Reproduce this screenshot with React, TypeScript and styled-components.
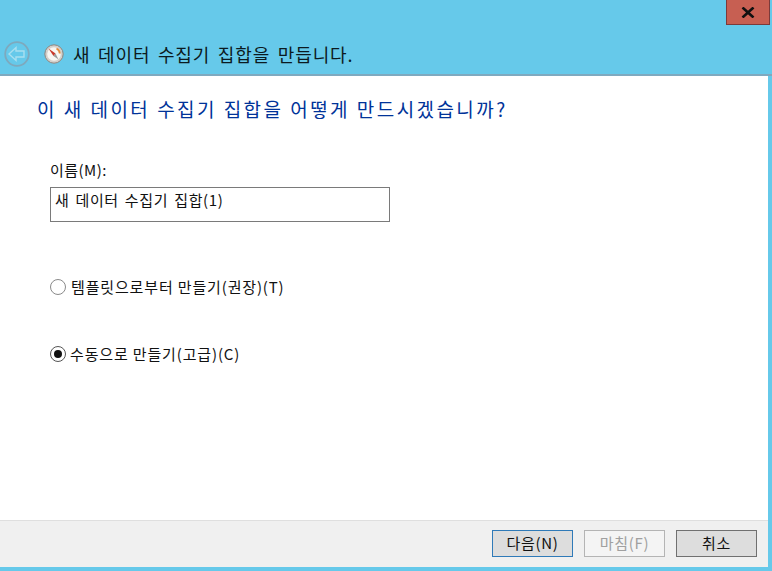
import React from "react";
import styled, { createGlobalStyle } from "styled-components";

const Global = createGlobalStyle`
  html, body { margin: 0; padding: 0; background: #66c9ea; }
  * { box-sizing: border-box; }
`;
const FONT = `"Noto Sans CJK KR", "Noto Sans", sans-serif`;

const Frame = styled.div`
  width: 772px;
  height: 571px;
  display: flex;
  flex-direction: column;
  overflow: hidden;
  background: #66c9ea;
  font-family: ${FONT};
  color: #000;
`;
const CaptionBar = styled.div`
  height: 25px;
  display: flex;
  justify-content: flex-end;
  padding-right: 2px;
`;
const CloseButton = styled.div`
  width: 44px;
  height: 25px;
  background: #c75f52;
  border: 1px solid #7c3a3a;
  border-top: none;
  display: flex;
  align-items: center;
  justify-content: center;
`;
const NavBar = styled.div`
  height: 49px;
  display: flex;
  align-items: center;
  padding: 9px 0 0 4px;
`;
const BackButton = styled.div`
  width: 26px;
  height: 26px;
  flex: none;
  margin-right: 14px;
  display: flex;
`;
const WizardIcon = styled.div`
  width: 20px;
  height: 20px;
  flex: none;
  margin-right: 9px;
  display: flex;
`;
const TitleText = styled.div`
  font-size: 18px;
  line-height: 24px;
  letter-spacing: 0.9px;
  word-spacing: 2.6px;
  color: #0c1a20;
`;
const Divider = styled.div`
  height: 2px;
  background: #7fa9bf;
`;
const Panel = styled.div`
  width: 768px;
  flex: 1;
  display: flex;
  flex-direction: column;
  background: #fff;
`;
const Content = styled.div`
  flex: 1;
  padding: 20px 0 0 37px;
  display: flex;
  flex-direction: column;
`;
const Heading = styled.div`
  font-size: 19px;
  line-height: 26px;
  letter-spacing: 2.42px;
  word-spacing: 0.2px;
  color: #003399;
`;
const FieldLabel = styled.div`
  margin: 39px 0 0 13px;
  font-size: 15px;
  line-height: 18px;
  letter-spacing: 0.45px;
  color: #111;
`;
const NameBox = styled.div`
  margin: 8px 0 0 13px;
  width: 340px;
  height: 35px;
  border: 1px solid #7a7a7a;
  padding: 2px 0 0 4px;
  font-size: 15px;
  line-height: 20px;
  letter-spacing: 0.65px;
  word-spacing: 2px;
  color: #111;
`;
const RadioRow = styled.div<{ $top: number; $gap: number }>`
  margin: ${(p) => p.$top}px 0 0 13px;
  display: flex;
  align-items: center;
  gap: ${(p) => p.$gap}px;
  font-size: 15px;
  line-height: 20px;
  letter-spacing: 0.85px;
  color: #111;
`;
const RadioCircle = styled.div<{ $checked?: boolean }>`
  width: 16px;
  height: 16px;
  flex: none;
  border-radius: 50%;
  border: 1px solid ${(p) => (p.$checked ? "#555" : "#8a8a8a")};
  background: #fff;
  display: flex;
  align-items: center;
  justify-content: center;
  &::after {
    content: "";
    display: ${(p) => (p.$checked ? "block" : "none")};
    width: 8px;
    height: 8px;
    border-radius: 50%;
    background: #111;
  }
`;
const Footer = styled.div`
  height: 47px;
  background: #f0f0f0;
  border-top: 1px solid #dfdfdf;
  display: flex;
  align-items: flex-start;
  justify-content: flex-end;
  gap: 11px;
  padding: 9px 11px 0 0;
`;
const FooterButton = styled.div<{ $variant: "default" | "disabled" | "normal" }>`
  width: 81px;
  height: 27px;
  display: flex;
  align-items: center;
  justify-content: center;
  font-size: 15px;
  line-height: 20px;
  letter-spacing: 0.7px;
  padding-bottom: 1px;
  background: ${(p) => (p.$variant === "disabled" ? "#f4f4f4" : "#dddddd")};
  color: ${(p) => (p.$variant === "disabled" ? "#a0a0a0" : "#111")};
  border: 1px solid
    ${(p) =>
      p.$variant === "default" ? "#2f7ab8" : p.$variant === "disabled" ? "#b4b4b4" : "#707070"};
`;
const BottomEdge = styled.div`
  height: 4px;
`;

export default function App() {
  return (
    <Frame>
      <Global />
      <CaptionBar>
        <CloseButton>
          <svg width="14" height="11" viewBox="0 0 14 11">
            <path d="M1.5 0.5 L12.5 10.5 M12.5 0.5 L1.5 10.5" stroke="#111" strokeWidth="2.6" fill="none" />
          </svg>
        </CloseButton>
      </CaptionBar>
      <NavBar>
        <BackButton>
          <svg width="26" height="26" viewBox="0 0 26 26">
            <circle cx="13" cy="13" r="11.8" fill="none" stroke="#7ea9bd" strokeWidth="1.8" />
            <path d="M5 13 L12 6.5 V10 H20 V16 H12 V19.5 Z" fill="none" stroke="#a9dff0" strokeWidth="1.4" />
          </svg>
        </BackButton>
        <WizardIcon>
          <svg width="20" height="20" viewBox="0 0 20 20">
            <circle cx="10" cy="10" r="9.2" fill="#d4d0cb" stroke="#8c8680" strokeWidth="1" />
            <circle cx="10" cy="10" r="6.8" fill="#f8f6f2" />
            <path d="M4.5 4.5 L11.5 9.5 L9.5 12 Z" fill="#c8372a" />
            <path d="M14.5 15.5 L9.5 12 L11.5 9.5 Z" fill="#9a9a9a" />
            <path d="M12.5 4.5 A6 6 0 0 1 15.8 9.5" fill="none" stroke="#e58a3c" strokeWidth="1.8" />
          </svg>
        </WizardIcon>
        <TitleText>새 데이터 수집기 집합을 만듭니다.</TitleText>
      </NavBar>
      <Divider />
      <Panel>
        <Content>
          <Heading>이 새 데이터 수집기 집합을 어떻게 만드시겠습니까?</Heading>
          <FieldLabel>이름(M):</FieldLabel>
          <NameBox>새 데이터 수집기 집합(1)</NameBox>
          <RadioRow $top={55} $gap={5}>
            <RadioCircle />
            템플릿으로부터 만들기(권장)(T)
          </RadioRow>
          <RadioRow $top={47} $gap={4}>
            <RadioCircle $checked />
            수동으로 만들기(고급)(C)
          </RadioRow>
        </Content>
        <Footer>
          <FooterButton $variant="default">다음(N)</FooterButton>
          <FooterButton $variant="disabled">마침(F)</FooterButton>
          <FooterButton $variant="normal">취소</FooterButton>
        </Footer>
      </Panel>
      <BottomEdge />
    </Frame>
  );
}
